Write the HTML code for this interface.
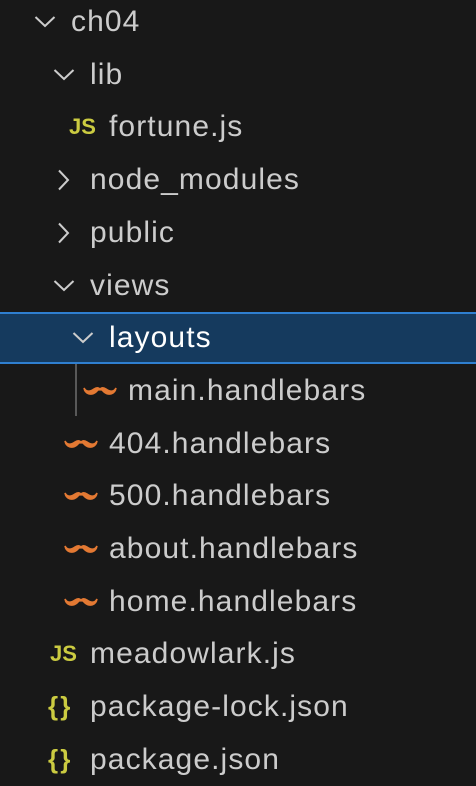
<!DOCTYPE html><html><head><style>
body{margin:0;width:476px;height:776px;background:#181818;overflow:hidden;position:relative;font-family:"Liberation Sans",sans-serif;}
.r{position:absolute;left:0;width:476px;height:52px;color:#cccccc;font-size:30px;letter-spacing:1.1px;}
.t{position:absolute;top:0;line-height:52px;white-space:nowrap;}
.sel{background:#153a5e;box-sizing:border-box;border-top:2px solid #2f7fd0;border-bottom:2px solid #2f7fd0;}
.sel .t{line-height:48px;color:#fff}
svg{position:absolute}
.js{position:absolute;font-weight:bold;color:#cbcb41;font-size:22px;letter-spacing:0;line-height:52px;top:0;}
.br{position:absolute;color:#cbcb41;font-size:26px;line-height:50px;top:0;font-weight:bold;letter-spacing:0}
</style></head><body>
<div id="c"></div>
<div style="position:absolute;left:75px;top:364px;width:2px;height:52px;background:#585858"></div>
<script>
const rows=[
['c',0,'ch04'],['c',1,'lib'],['js',2,'fortune.js'],['r',1,'node_modules'],['r',1,'public'],['c',1,'views'],['c',2,'layouts',1],['m',3,'main.handlebars'],['m',2,'404.handlebars'],['m',2,'500.handlebars'],['m',2,'about.handlebars'],['m',2,'home.handlebars'],['js',1,'meadowlark.js'],['b',1,'package-lock.json'],['b',1,'package.json']];
let h='';
rows.forEach((r,i)=>{const top=Math.round(22+52.7*i-26);const [k,l,n,s]=r;const ic=34+19*l;const tx=71+19*l;
let icon='';const sel=s?' sel':'';const oy=s?-2:0;
if(k=='c')icon=`<svg style="left:${ic}px;top:${19+oy}px" width="22" height="14"><polyline points="1.5,2 11,11 20.5,2" fill="none" stroke="#cccccc" stroke-width="2"/></svg>`;
if(k=='r')icon=`<svg style="left:${ic+4}px;top:${15+oy}px" width="14" height="24"><polyline points="2,1.5 11,11 2,20.5" fill="none" stroke="#cccccc" stroke-width="2"/></svg>`;
if(k=='js')icon=`<div class="js" style="left:${ic-3}px">JS</div>`;
if(k=='b')icon=`<div class="br" style="left:${ic-5}px">{&#8202;}</div>`;
if(k=='m')icon=`<svg style="left:${ic-8}px;top:${19+oy}px" width="34" height="14"><path d="M1,4 C2,10 8,12 13,8 C15,6 16,5 17,6 C18,5 19,6 21,8 C26,12 32,10 33,4 C31,8 27,8 23,5 C20,3 18,4 17,5 C16,4 14,3 11,5 C7,8 3,8 1,4Z" fill="#e37933" stroke="#e37933" stroke-width="1.5"/></svg>`;
h+=`<div class="r${sel}" style="top:${top}px">${icon}<div class="t" style="left:${tx}px">${n}</div></div>`;});
document.getElementById('c').innerHTML=h;
</script>
</body></html>
